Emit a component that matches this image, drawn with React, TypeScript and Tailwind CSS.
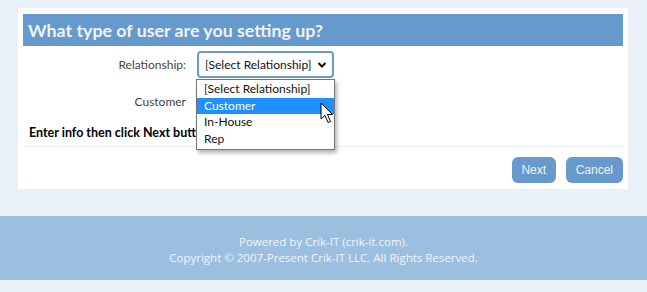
function Cursor() {
  return (
    <svg width="14" height="22" viewBox="0 0 14 22" className="absolute left-[320px] top-[102px]">
      <path d="M1 1 L1 17 L5 13.5 L8 20.5 L10.5 19.5 L7.5 12.5 L12.5 12.5 Z" fill="#fff" stroke="#000" strokeWidth="1" strokeLinejoin="round" />
    </svg>
  )
}

function App() {
  const options = ['[Select Relationship]', 'Customer', 'In-House', 'Rep']
  return (
    <div className="relative min-h-screen bg-[#e9f0f8] pt-[8px] font-['Lato',sans-serif]">
      <div className="ml-[18px] w-[610px] bg-white px-[5px] pt-[6px] pb-[6px]">
        <div className="flex h-[32px] items-center bg-[#6699cc] px-[5px] text-[17.8px] font-bold text-[#eef3fa]">
          What type of user are you setting up?
        </div>
        <div className="mt-[5px] grid grid-cols-[163px_1fr] items-center gap-x-[11px] gap-y-[13px] text-[12px] text-[#444]">
          <label className="text-right">Relationship:</label>
          <div className="flex h-[27px] w-[137px] items-center justify-between whitespace-nowrap rounded-[4px] border-2 border-[#6c9bcf] pl-[6px] pr-[5px] text-[#111]">
            <span>[Select Relationship]</span>
            <svg width="10" height="8" viewBox="0 0 10 8" className="shrink-0">
              <path d="M1.5 2 L5 5.5 L8.5 2" fill="none" stroke="#111" strokeWidth="2" />
            </svg>
          </div>
          <label className="text-right">Customer</label>
          <div className="h-[22px] w-[130px] rounded-[3px] border border-[#aaa]" />
        </div>
        <div className="mt-[11px] pl-[6px] text-[12.5px] font-bold text-black">Enter info then click Next button.</div>
        <div className="mt-[3px] h-px bg-[#e6eef7]" />
        <div className="mt-[10px] flex justify-end gap-[10px]">
          <button className="h-[26px] rounded-[6px] bg-[#6699cc] px-[9.5px] font-['Liberation_Sans',sans-serif] text-[12px] text-[#eef3fa]">Next</button>
          <button className="h-[26px] rounded-[6px] bg-[#6699cc] px-[10px] font-['Liberation_Sans',sans-serif] text-[12px] text-[#eef3fa]">Cancel</button>
        </div>
      </div>
      <div className="mt-[27px] flex h-[64px] flex-col items-center justify-center bg-[#9dbfdf] pt-[4px] font-['Open_Sans',sans-serif] text-[11.5px] leading-[16px] text-[#f0f5fb]">
        <div>Powered by Crik-IT (crik-it.com).</div>
        <div>Copyright © 2007-Present Crik-IT LLC. All Rights Reserved.</div>
      </div>
      <div className="absolute left-[196px] top-[79px] w-[139px] border border-[#767676] bg-white py-[1px] text-[12px] leading-[16.7px] text-[#111] shadow-[2px_3px_4px_rgba(0,0,0,0.3)]">
        {options.map((o) => (
          <div key={o} className={o === 'Customer' ? 'bg-[#1e90ff] pl-[7px] text-white' : 'pl-[7px]'}>
            {o}
          </div>
        ))}
      </div>
      <Cursor />
    </div>
  )
}

export default App
